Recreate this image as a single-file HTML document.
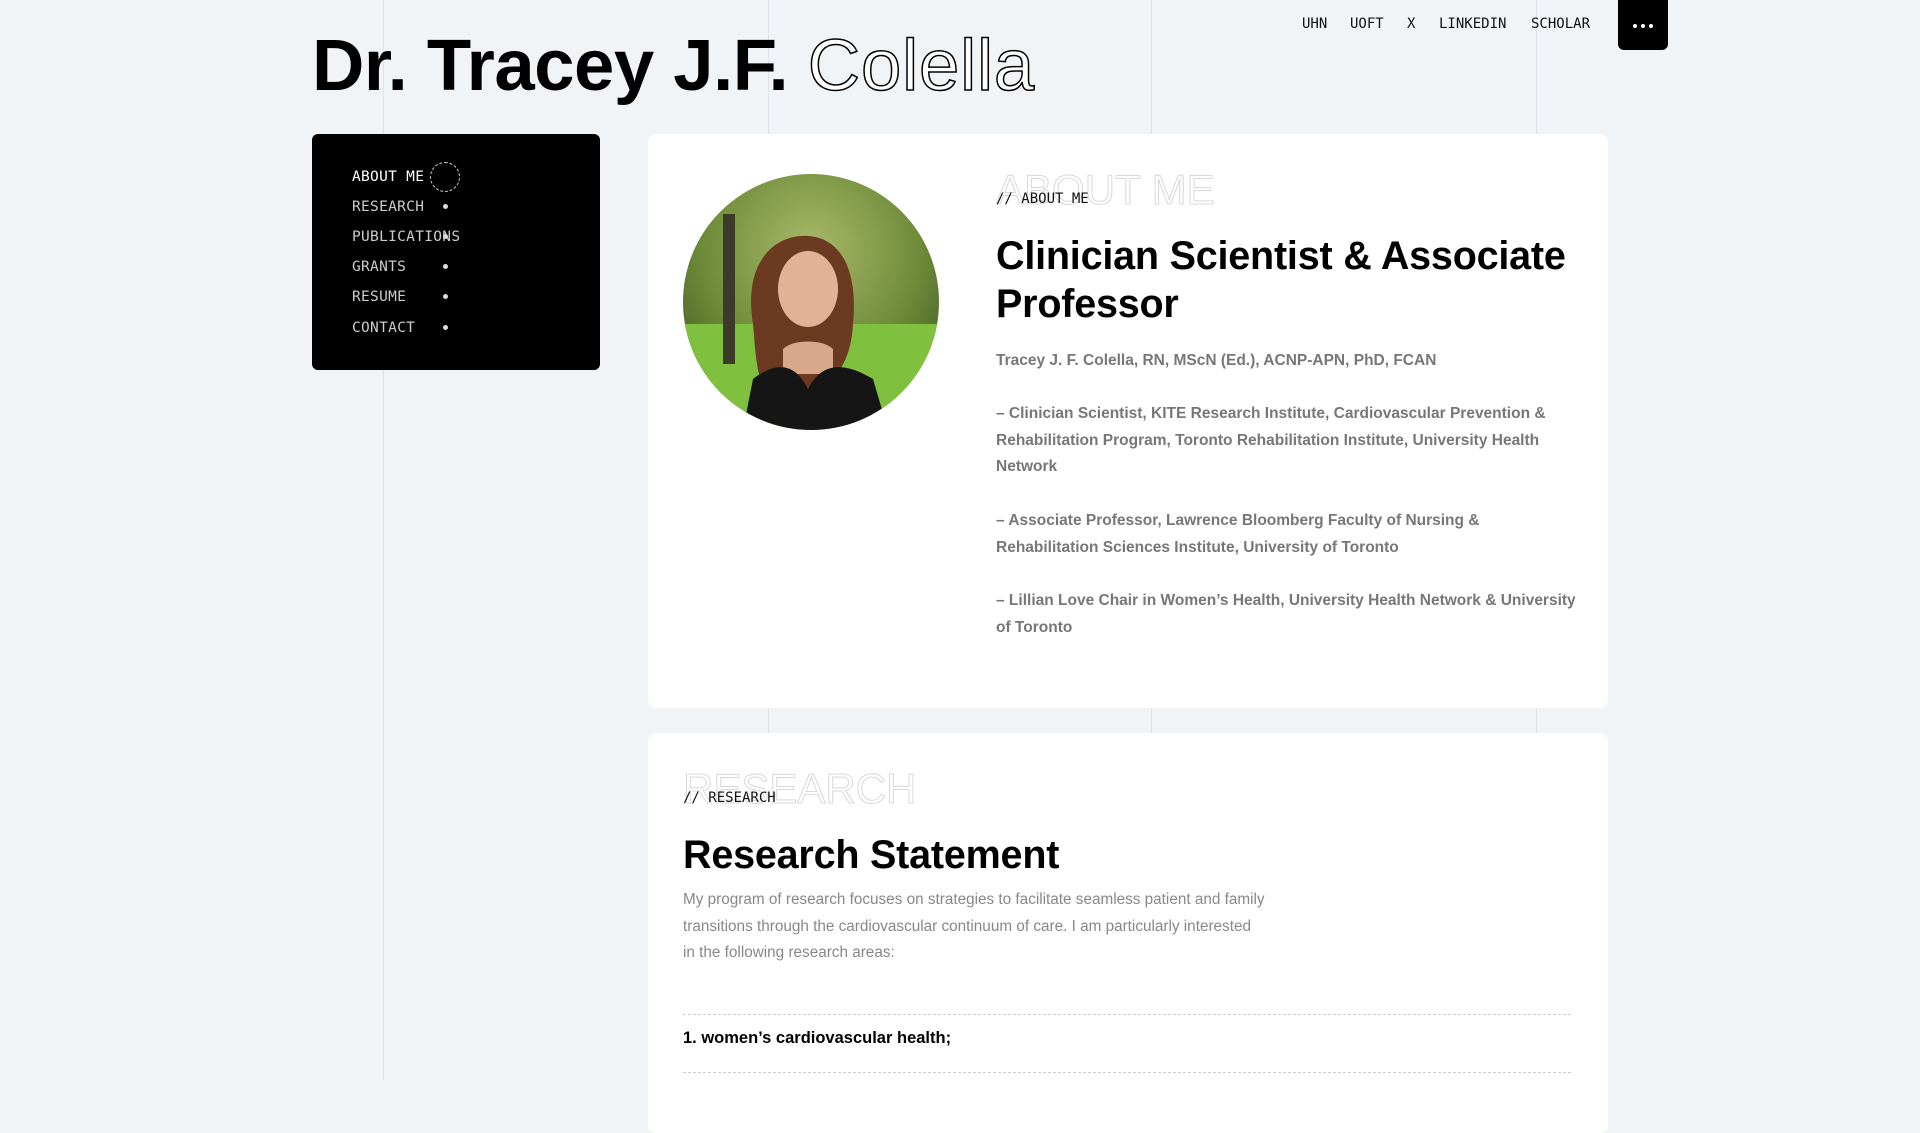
<!DOCTYPE html>
<html><head><meta charset="utf-8"><style>
*{margin:0;padding:0;box-sizing:border-box}
html,body{width:1920px;height:1080px;overflow:hidden;background:#f0f4f7;font-family:"Liberation Sans",sans-serif}
.vl{position:absolute;top:0;width:1px;height:1080px;background:#dde3e8}
.mono{font-family:"DejaVu Sans Mono","Liberation Mono",monospace}
h1.title{position:absolute;left:312px;top:24px;font-size:72.5px;font-weight:700;color:#000;letter-spacing:-0.5px;white-space:nowrap}
h1.title span{color:#fff;-webkit-text-stroke:1.5px #000;font-weight:400;letter-spacing:0.8px}
.top{position:absolute;top:16px;font-size:14px;color:#111}
.menu{position:absolute;left:1618px;top:0;width:50px;height:50px;background:#000;border-radius:0 0 6px 6px}
.menu i{position:absolute;top:24px;width:4px;height:4px;border-radius:50%;background:#fff}
.side{position:absolute;left:312px;top:134px;width:288px;height:236px;background:#000;border-radius:6px}
.side div{position:absolute;left:40px;font-size:14.5px;color:#ccc;letter-spacing:.3px}
.dot{position:absolute;left:443px;width:5px;height:5px;border-radius:50%;background:#ddd}
.card{position:absolute;left:648px;width:960px;background:#fff;border-radius:8px}
.ghost{position:absolute;font-size:42px;font-weight:400;color:#fff;-webkit-text-stroke:1px #d8d8d8;white-space:nowrap}
.lab{position:absolute;font-size:14px;color:#111}
.h2{position:absolute;font-size:39.5px;font-weight:700;color:#000;line-height:48px;letter-spacing:-0.2px;white-space:nowrap}
.p{position:absolute;font-size:15.5px;font-weight:700;color:#777;line-height:26.5px}
</style></head><body>
<div class="vl" style="left:383px"></div><div class="vl" style="left:768px"></div><div class="vl" style="left:1151px"></div><div class="vl" style="left:1536px"></div>
<h1 class="title">Dr. Tracey J.F. <span>Colella</span></h1>
<div class="top mono" style="left:1302px">UHN</div>
<div class="top mono" style="left:1350px">UOFT</div>
<div class="top mono" style="left:1407px">X</div>
<div class="top mono" style="left:1439px">LINKEDIN</div>
<div class="top mono" style="left:1531px">SCHOLAR</div>
<div class="menu"><i style="left:15px"></i><i style="left:23px"></i><i style="left:31px"></i></div>
<div class="side">
<div class="mono" style="top:35px;color:#fff">ABOUT ME</div>
<div class="mono" style="top:65px">RESEARCH</div>
<div class="mono" style="top:95px">PUBLICATIONS</div>
<div class="mono" style="top:125px">GRANTS</div>
<div class="mono" style="top:155px">RESUME</div>
<div class="mono" style="top:186px">CONTACT</div>
</div>
<div style="position:absolute;left:430px;top:162px;width:30px;height:30px;border:1px dashed #ccc;border-radius:50%"></div>
<div class="dot" style="top:204px"></div><div class="dot" style="top:234px"></div><div class="dot" style="top:264px"></div><div class="dot" style="top:294px"></div><div class="dot" style="top:325px"></div>

<div class="card" style="top:134px;height:574px">
<svg style="position:absolute;left:35px;top:40px" width="256" height="256" viewBox="0 0 256 256">
<defs><clipPath id="c"><circle cx="128" cy="128" r="128"/></clipPath>
<radialGradient id="bg" cx="50%" cy="30%" r="70%"><stop offset="0" stop-color="#a9b96a"/><stop offset=".6" stop-color="#6f8c3a"/><stop offset="1" stop-color="#3f5a22"/></radialGradient></defs>
<g clip-path="url(#c)">
<rect width="256" height="256" fill="url(#bg)"/>
<rect x="0" y="150" width="256" height="106" fill="#7fc13f"/>
<rect x="40" y="40" width="12" height="150" fill="#3d3a2a"/>
<path d="M70 150 C60 90 90 60 125 62 C160 64 175 100 170 150 C168 190 150 210 130 215 L80 215 C72 190 72 170 70 150Z" fill="#6b3a20"/>
<ellipse cx="125" cy="115" rx="30" ry="38" fill="#e2b296"/>
<path d="M100 175 C110 165 140 165 150 175 L150 200 L100 200Z" fill="#d9a88a"/>
<path d="M60 256 L70 205 C90 190 110 185 125 215 C140 185 165 190 190 205 L205 256Z" fill="#151515"/>
</g></svg>
<div class="ghost" style="left:348px;top:32px">ABOUT ME</div>
<div class="lab mono" style="left:348px;top:57px">// ABOUT ME</div>
<div class="h2" style="left:348px;top:98px">Clinician Scientist &amp; Associate<br>Professor</div>
<div class="p" style="left:348px;top:214px">Tracey J. F. Colella, RN, MScN (Ed.), ACNP-APN, PhD, FCAN</div>
<div class="p" style="left:348px;top:267px;width:580px">– Clinician Scientist, KITE Research Institute, Cardiovascular Prevention &amp; Rehabilitation Program, Toronto Rehabilitation Institute, University Health Network</div>
<div class="p" style="left:348px;top:374px;width:560px">– Associate Professor, Lawrence Bloomberg Faculty of Nursing &amp; Rehabilitation Sciences Institute, University of Toronto</div>
<div class="p" style="left:348px;top:454px;width:585px">– Lillian Love Chair in Women’s Health, University Health Network &amp; University of Toronto</div>
</div>

<div class="card" style="top:733px;height:400px">
<div class="ghost" style="left:35px;top:32px">RESEARCH</div>
<div class="lab mono" style="left:35px;top:57px">// RESEARCH</div>
<div class="h2" style="left:35px;top:98px">Research Statement</div>
<div class="p" style="left:35px;top:154px;white-space:nowrap;font-weight:400;color:#888;font-size:15.3px">My program of research focuses on strategies to facilitate seamless patient and family<br>transitions through the cardiovascular continuum of care. I am particularly interested<br>in the following research areas:</div>
<div style="position:absolute;left:35px;top:281px;width:888px;border-top:1px dashed #ccc"></div>
<div style="position:absolute;left:35px;top:296px;font-size:16.5px;font-weight:700;color:#000">1. women’s cardiovascular health;</div>
<div style="position:absolute;left:35px;top:339px;width:888px;border-top:1px dashed #ccc"></div>
</div>
</body></html>
